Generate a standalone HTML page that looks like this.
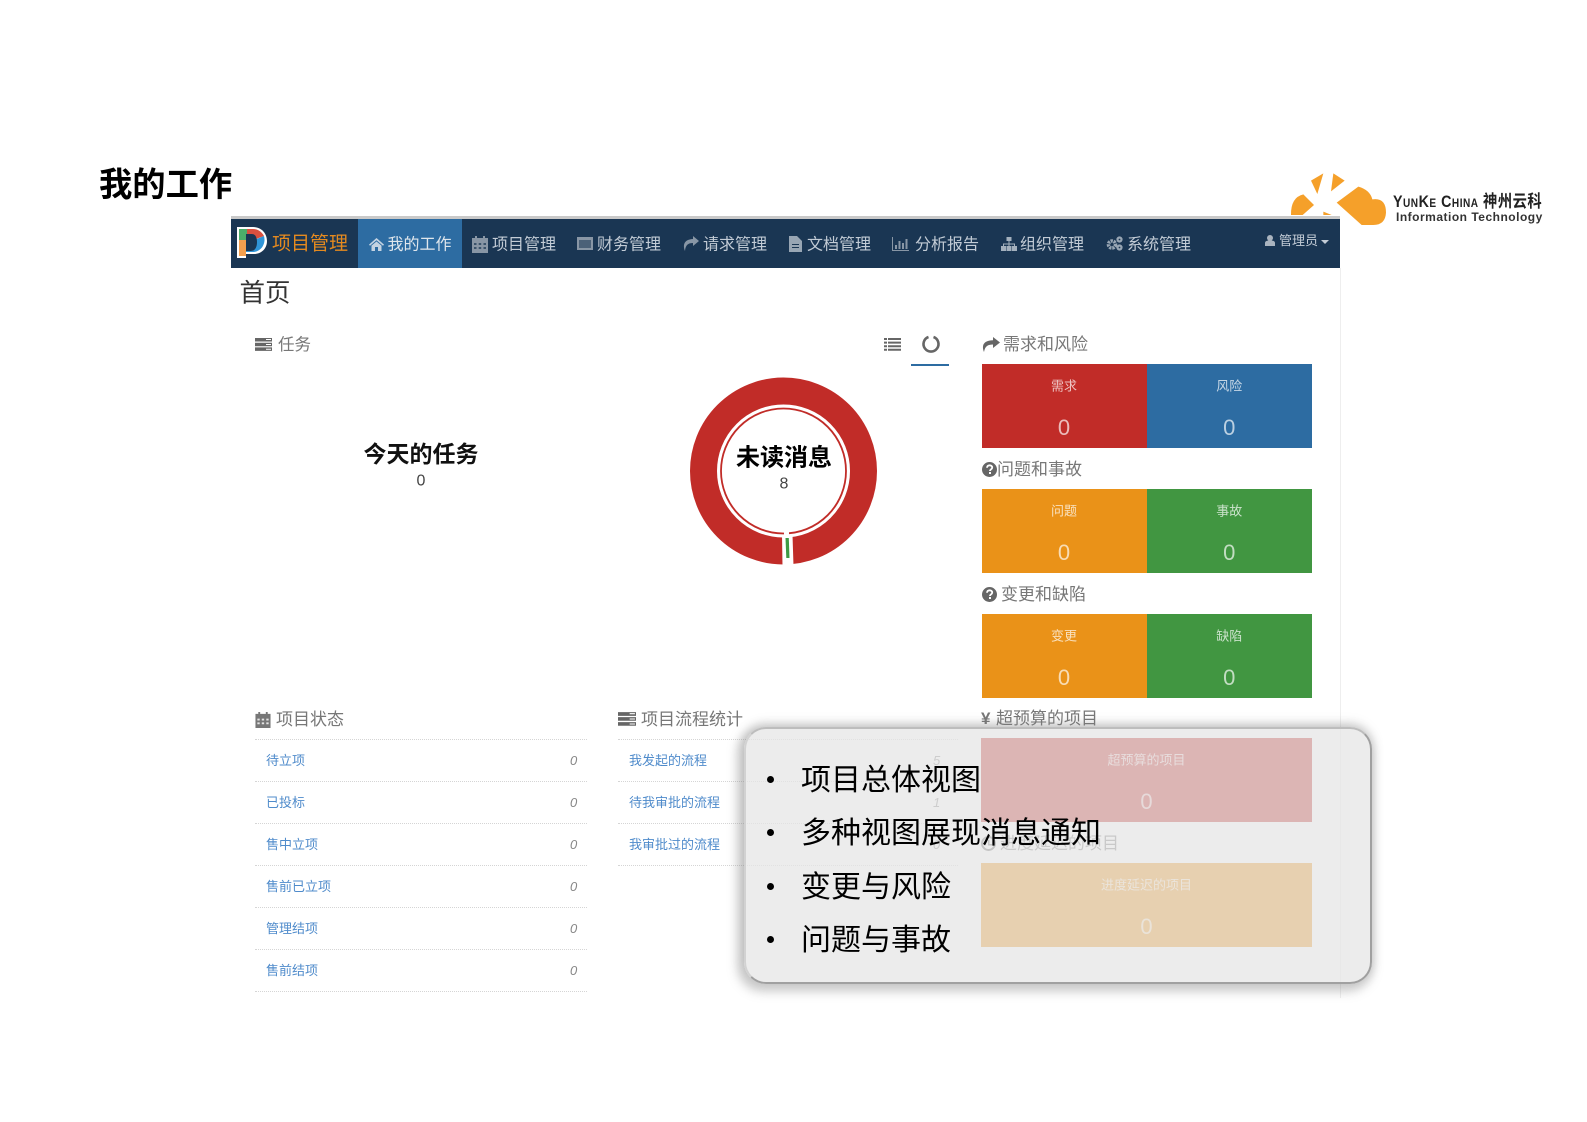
<!DOCTYPE html>
<html lang="zh"><head><meta charset="utf-8"><title>我的工作</title>
<style>
html,body{margin:0;padding:0;background:#fff}
#p{position:relative;width:1587px;height:1122px;overflow:hidden;background:#fff;font-family:"Liberation Sans","Noto Sans CJK SC",sans-serif;color:#333;filter:blur(.35px)}
.t{position:absolute;transform:translateY(-50%);white-space:nowrap;line-height:1.2;margin-top:1px}
.c{transform:translate(-50%,-50%);text-align:center}
.a{position:absolute}
.n{color:#c3ccd6;font-size:16px;top:244px}
.h{color:#777;font-size:17px}
svg{position:absolute;display:block;overflow:visible}
.b{position:absolute;width:165px;height:84px}
.l{position:absolute;left:0;right:0;top:21.500px;text-align:center;font-size:13px;line-height:1;transform:translateY(-50%);color:rgba(255,255,255,.72)}
.v{position:absolute;left:0;right:0;top:63.500px;text-align:center;font-size:22px;line-height:1;transform:translateY(-50%);color:rgba(255,255,255,.68)}
.d{position:absolute;height:0;border-top:1px dotted #d5d5d5}
.li{color:#4f8bcb;font-size:13px}
.z{color:#888;font-size:13px;font-style:italic}
.bul{font-size:30px;color:#000;left:801px}
.dot{position:absolute;left:767px;width:7px;height:7px;border-radius:50%;background:#000}
</style></head><body><div id="p">

<div class="t" style="left:99px;top:184.500px;font-size:33.300px;font-weight:700;color:#000">我的工作</div>

<!-- company logo -->
<svg style="left:1260px;top:160px" width="280" height="80" viewBox="0 0 840 240" fill="#f5a02a">
<path d="M153 62 L190 40 L172 102Z"/><path d="M220 40 L254 62 L213 94Z"/>
<path d="M93 165 Q92 112 130 103 L162 135 L128 165Z"/>
<path d="M190 155 L215 165 L190 165Z"/>
<path d="M230 128 L295 80 Q330 90 337 118 Q378 112 378 158 Q376 195 340 195 L305 195Z"/>
</svg>
<div class="t" style="left:1393px;top:201px;font-size:17px;font-weight:700;color:#222;transform:translateY(-50%) scaleX(.84);transform-origin:left center;font-variant:small-caps;letter-spacing:.6px">YunKe China 神州云科</div>
<div class="t" style="left:1396px;top:216px;font-size:12px;font-weight:700;color:#333;letter-spacing:.5px">Information Technology</div>

<!-- right content edge -->
<div class="a" style="left:1340px;top:268px;width:1px;height:730px;background:#eee"></div>

<!-- navbar -->
<div class="a" style="left:231px;top:216px;width:1109px;height:3px;background:#c9c9c9"></div>
<div class="a" style="left:231px;top:219px;width:1109px;height:49px;background:#1a3653"></div>
<div class="a" style="left:357.500px;top:219px;width:104.500px;height:49px;background:#2d6ca2"></div>
<svg style="left:237px;top:227px" width="30" height="31" viewBox="0 0 30 31">
<path d="M0 0H16C25 0 30 7 30 14C30 22 24 27 17 27H9V31H0Z" fill="#fff"/>
<path d="M2 2H10V13H2Z" fill="#4caf6a"/>
<path d="M10 2H16C21 2 25 5 27 9L19 12 15 7H10Z" fill="#d9503f"/>
<path d="M27 9C29 16 25 24 17 25H9V24H14C17 24 19 20 19.500 12Z" fill="#2f95d8"/>
<path d="M2 13H9V29H2Z" fill="#f3a04f"/>
<path d="M9 7H15C18 7 20 10 20 15C20 20 18 24 14 24H9Z" fill="#1a3653"/>
</svg>
<div class="t" style="left:272px;top:244px;font-size:19px;color:#e58a1f">项目管理</div>

<svg style="left:369px;top:238px" width="15" height="13" viewBox="0 0 15 13" fill="#c4d3e2"><path d="M7.500 0L15 6.600 14 7.800 7.500 2.300 1 7.800 0 6.600ZM2.500 7.600L7.500 3.500 12.500 7.600V13H9V9H6V13H2.500Z"/></svg>
<div class="t n" style="left:387.500px;color:#dfe6ec">我的工作</div>

<svg style="left:472px;top:236px" width="16" height="17" viewBox="0 0 16 17" fill="#8896a5"><path d="M3 0h2v3H3zM11 0h2v3h-2zM0 2h16v15H0z"/><path d="M2 7h2.500v2H2zM6.700 7h2.500v2H6.700zM11.500 7H14v2h-2.500zM2 11h2.500v2H2zM6.700 11h2.500v2H6.700zM11.500 11H14v2h-2.500z" fill="#1a3653" opacity=".7"/></svg>
<div class="t n" style="left:492px">项目管理</div>

<svg style="left:577px;top:237px" width="16" height="13" viewBox="0 0 16 13" fill="#8896a5"><path d="M0 0h16v13H0z"/><path d="M2 3h12v8H2z" fill="#1a3653" opacity=".55"/></svg>
<div class="t n" style="left:597px">财务管理</div>

<svg style="left:683px;top:236px" width="16" height="15" viewBox="0 0 16 15" fill="#8896a5"><path d="M10 0L16 5 10 10V7C5 7 2.500 9 2 15 0 10 0 3.500 10 3Z"/></svg>
<div class="t n" style="left:703px">请求管理</div>

<svg style="left:789px;top:236px" width="13" height="16" viewBox="0 0 13 16" fill="#98a6b4"><path d="M0 0h8l5 5v11H0z"/><path d="M3 8h7v1H3zM3 11h7v1H3z" fill="#1a3653"/></svg>
<div class="t n" style="left:807px">文档管理</div>

<svg style="left:892px;top:237px" width="17" height="14" viewBox="0 0 17 14" fill="#8896a5"><path d="M0 0h1v13h16v1H0z"/><path d="M3 8h2v4H3zM6.500 4h2v8h-2zM10 6h2v6h-2zM13.500 2h2v10h-2z"/></svg>
<div class="t n" style="left:915px">分析报告</div>

<svg style="left:1001px;top:237px" width="16" height="14" viewBox="0 0 16 14" fill="#a3b0bd"><path d="M5.500 0h5v4h-5zM7.500 4h1v2.500H14V9h-1V7.500H8.500V9h-1V7.500H3V9H2V6.500h5.500z"/><path d="M0 9h5v5H0zM5.500 9h5v5h-5zM11 9h5v5h-5z"/></svg>
<div class="t n" style="left:1020px">组织管理</div>

<svg style="left:1106px;top:236px" width="17" height="15" viewBox="0 0 17 15" fill="none" stroke="#98a6b4"><circle cx="6" cy="8.500" r="3.500" stroke-width="3.600" stroke-dasharray="2.200 .8"/><circle cx="13.500" cy="3.500" r="2" stroke-width="2.200"/><circle cx="13.500" cy="11.500" r="2" stroke-width="2.200"/></svg>
<div class="t n" style="left:1127px">系统管理</div>

<svg style="left:1265px;top:235px" width="10" height="11" viewBox="0 0 10 11" fill="#aab4bf"><circle cx="5" cy="3" r="3"/><path d="M0 11V8C0 6 2 5.500 5 5.500S10 6 10 8v3z"/></svg>
<div class="t" style="left:1279px;top:240px;font-size:13px;color:#c3ccd6">管理员</div>
<div class="a" style="left:1321px;top:240px;border:4px solid transparent;border-top-color:#c3ccd6;border-bottom:0"></div>

<div class="t" style="left:239.500px;top:293px;font-size:25.500px;color:#333">首页</div>

<!-- tasks -->
<svg style="left:255px;top:338px" width="17" height="13" viewBox="0 0 17 13" fill="#666"><path d="M0 0h17v3.500H0zM0 4.700h17v3.500H0zM0 9.400h17v3.500H0z"/><path d="M11 1h5v1h-5zM11 6h5v1h-5zM11 10.700h5v1h-5z" fill="#fff"/></svg>
<div class="t h" style="left:278px;top:345px;font-size:16.500px">任务</div>
<svg style="left:884px;top:338px" width="17" height="13" viewBox="0 0 17 13" fill="#666"><path d="M0 0h3v2H0zM4 0h13v2H4zM0 3.600h3v2H0zM4 3.600h13v2H4zM0 7.200h3v2H0zM4 7.200h13v2H4zM0 10.800h3v2H0zM4 10.800h13v2H4z"/></svg>
<svg style="left:922px;top:335px" width="18" height="18" viewBox="0 0 18 18" fill="none"><path d="M6.500 2A7.500 7.500 0 1 0 11.500 2" stroke="#666" stroke-width="2.600"/></svg>
<div class="a" style="left:911px;top:364px;width:38px;height:2px;background:#2d6ca2"></div>

<div class="t c" style="left:421px;top:454px;font-size:23px;font-weight:700;color:#111">今天的任务</div>
<div class="t c" style="left:421px;top:480px;font-size:16px;color:#444">0</div>

<svg style="left:680px;top:368px" width="208" height="208" viewBox="0 0 208 208">
<circle cx="103.500" cy="103" r="80" fill="none" stroke="#c12c28" stroke-width="27"/>
<circle cx="103.500" cy="103" r="62.500" fill="none" stroke="#c12c28" stroke-width="1.800"/>
<path d="M102 167 L112.500 167 L113.500 198 L102.500 198Z" fill="#fff"/>
<path d="M104 160 H109 V170 H104Z" fill="#fff"/>
<path d="M105.500 170 L108.800 170 L109.500 190 L106.300 190Z" fill="#3e9a44"/>
</svg>
<div class="t c" style="left:784px;top:458px;font-size:24px;font-weight:700;color:#000">未读消息</div>
<div class="t c" style="left:784px;top:482.500px;font-size:16px;color:#444">8</div>

<!-- right tiles -->
<svg style="left:982px;top:337px" width="18" height="15" viewBox="0 0 18 15" fill="#666"><path d="M11 0L18 5.500 11 11V7.500C6 7.500 3 9 2 15 0 10 0 3.500 11 3.300Z"/></svg>
<div class="t h" style="left:1003px;top:344px">需求和风险</div>
<div class="b" style="left:981.500px;top:364px;background:#c12c28"><div class="l">需求</div><div class="v">0</div></div>
<div class="b" style="left:1146.500px;top:364px;background:#2d6ca2;width:165.500px"><div class="l">风险</div><div class="v">0</div></div>

<svg style="left:982px;top:462px" width="15" height="15" viewBox="0 0 15 15"><circle cx="7.500" cy="7.500" r="7.500" fill="#666"/><path d="M5 5.800C5 4 6.300 3.300 7.600 3.300 9.200 3.300 10.200 4.300 10.200 5.500 10.200 7.300 8 7.300 8 9" fill="none" stroke="#fff" stroke-width="1.800"/><path d="M7 10h2v2H7z" fill="#fff"/></svg>
<div class="t h" style="left:997px;top:469px">问题和事故</div>
<div class="b" style="left:981.500px;top:489px;background:#ea9218"><div class="l">问题</div><div class="v">0</div></div>
<div class="b" style="left:1146.500px;top:489px;background:#419641;width:165.500px"><div class="l">事故</div><div class="v">0</div></div>

<svg style="left:982px;top:587px" width="15" height="15" viewBox="0 0 15 15"><circle cx="7.500" cy="7.500" r="7.500" fill="#666"/><path d="M5 5.800C5 4 6.300 3.300 7.600 3.300 9.200 3.300 10.200 4.300 10.200 5.500 10.200 7.300 8 7.300 8 9" fill="none" stroke="#fff" stroke-width="1.800"/><path d="M7 10h2v2H7z" fill="#fff"/></svg>
<div class="t h" style="left:1001px;top:594px">变更和缺陷</div>
<div class="b" style="left:981.500px;top:614px;background:#ea9218"><div class="l">变更</div><div class="v">0</div></div>
<div class="b" style="left:1146.500px;top:614px;background:#419641;width:165.500px"><div class="l">缺陷</div><div class="v">0</div></div>

<div class="t h" style="left:981px;top:718px;font-weight:700;font-size:17px">¥</div>
<div class="t h" style="left:996px;top:718px">超预算的项目</div>
<div class="b" style="left:981px;top:738px;background:#c12c28;width:331px"><div class="l">超预算的项目</div><div class="v">0</div></div>
<svg style="left:981px;top:836px" width="15" height="15" viewBox="0 0 15 15"><circle cx="7.500" cy="7.500" r="6.500" fill="none" stroke="#666" stroke-width="2"/><path d="M7 4h1.500v4H11v1.500H7z" fill="#666"/></svg>
<div class="t h" style="left:1000px;top:843px">进度延迟的项目</div>
<div class="b" style="left:981px;top:863px;background:#ea9218;width:331px"><div class="l">进度延迟的项目</div><div class="v">0</div></div>

<!-- status list -->
<svg style="left:255px;top:712px" width="16" height="16" viewBox="0 0 16 17" fill="#777"><path d="M3 0h2v3H3zM11 0h2v3h-2zM0 2h16v15H0z"/><path d="M2 7h2.500v2H2zM6.700 7h2.500v2H6.700zM11.500 7H14v2h-2.500zM2 11h2.500v2H2zM6.700 11h2.500v2H6.700zM11.500 11H14v2h-2.500z" fill="#fff" opacity=".8"/></svg>
<div class="t h" style="left:276px;top:719px">项目状态</div>
<svg style="left:618px;top:712px" width="18" height="14" viewBox="0 0 17 13" fill="#666"><path d="M0 0h17v3.500H0zM0 4.700h17v3.500H0zM0 9.400h17v3.500H0z"/><path d="M11 1h5v1h-5zM11 6h5v1h-5zM11 10.700h5v1h-5z" fill="#fff"/></svg>
<div class="t h" style="left:641px;top:719px">项目流程统计</div>

<div class="d" style="left:255px;width:332px;top:739px"></div>
<div class="d" style="left:255px;width:332px;top:781px"></div>
<div class="d" style="left:255px;width:332px;top:823px"></div>
<div class="d" style="left:255px;width:332px;top:865px"></div>
<div class="d" style="left:255px;width:332px;top:907px"></div>
<div class="d" style="left:255px;width:332px;top:949px"></div>
<div class="d" style="left:255px;width:332px;top:991px"></div>

<div class="t li" style="left:266px;top:760px">待立项</div><div class="t z" style="left:570px;top:760px">0</div>
<div class="t li" style="left:266px;top:802px">已投标</div><div class="t z" style="left:570px;top:802px">0</div>
<div class="t li" style="left:266px;top:844px">售中立项</div><div class="t z" style="left:570px;top:844px">0</div>
<div class="t li" style="left:266px;top:886px">售前已立项</div><div class="t z" style="left:570px;top:886px">0</div>
<div class="t li" style="left:266px;top:928px">管理结项</div><div class="t z" style="left:570px;top:928px">0</div>
<div class="t li" style="left:266px;top:970px">售前结项</div><div class="t z" style="left:570px;top:970px">0</div>

<div class="d" style="left:618px;width:340px;top:739px"></div>
<div class="d" style="left:618px;width:340px;top:781px"></div>
<div class="d" style="left:618px;width:340px;top:823px"></div>
<div class="d" style="left:618px;width:340px;top:865px"></div>
<div class="t li" style="left:629px;top:760px">我发起的流程</div><div class="t z" style="left:933px;top:760px">5</div>
<div class="t li" style="left:629px;top:802px">待我审批的流程</div><div class="t z" style="left:933px;top:802px">1</div>
<div class="t li" style="left:629px;top:844px">我审批过的流程</div><div class="t z" style="left:933px;top:844px">0</div>

<!-- overlay panel -->
<div class="a" style="left:744px;top:727px;width:628px;height:257px;box-sizing:border-box;border-radius:22px;background:rgba(230,230,230,.74);border:2px solid;border-color:#bdbdbd #a0a0a0 #a0a0a0 #d2d2d2;box-shadow:-3px 4px 10px 4px rgba(130,130,130,.38),0 -3px 10px 1px rgba(130,130,130,.28)"></div>
<div class="dot" style="top:776px"></div><div class="t bul" style="top:780px">项目总体视图</div>
<div class="dot" style="top:829px"></div><div class="t bul" style="top:833px">多种视图展现消息通知</div>
<div class="dot" style="top:883px"></div><div class="t bul" style="top:887px">变更与风险</div>
<div class="dot" style="top:936px"></div><div class="t bul" style="top:940px">问题与事故</div>

</div></body></html>
